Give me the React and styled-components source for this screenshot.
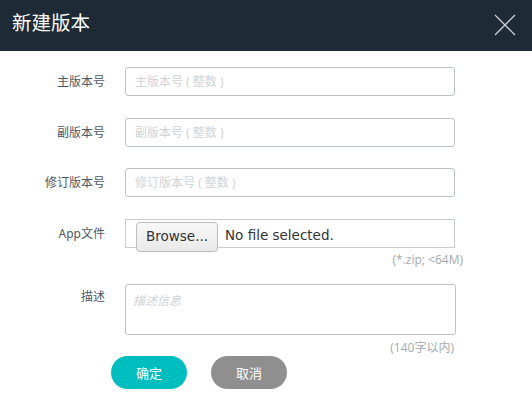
import React from 'react';
import styled, { createGlobalStyle } from 'styled-components';

const GlobalStyle = createGlobalStyle`
    html, body {
        margin: 0;
        padding: 0;
        background: #ffffff;
    }
    body {
        font-family: 'Noto Sans', 'Noto Sans CJK SC', sans-serif;
    }
`;

const fields = [
    { label: '主版本号', placeholder: '主版本号 ( 整数 )' },
    { label: '副版本号', placeholder: '副版本号 ( 整数 )' },
    { label: '修订版本号', placeholder: '修订版本号 ( 整数 )' },
];

const CloseIcon = () => (
    <svg width="22" height="22" viewBox="0 0 22 22">
        <path d="M1 1 L21 21 M21 1 L1 21" stroke="#c9ced3" strokeWidth="1.3" fill="none" />
    </svg>
);

function App() {
    return (
        <Dialog>
            <GlobalStyle />
            <Header>
                <Title>新建版本</Title>
                <CloseButton><CloseIcon /></CloseButton>
            </Header>
            <Form>
                {fields.map((f) => (
                    <Row key={f.label} gap={21.67}>
                        <Label>{f.label}</Label>
                        <TextInput placeholder={f.placeholder} />
                    </Row>
                ))}
                <Row gap={0}>
                    <Label>App文件</Label>
                    <FileBox>
                        <BrowseButton>Browse...</BrowseButton>
                        <FileText>No file selected.</FileText>
                    </FileBox>
                </Row>
                <Hint right={69} top={4} bottom={16}>(*.zip; &lt;64M)</Hint>
                <Row top gap={0}>
                    <Label top>描述</Label>
                    <TextArea placeholder="描述信息" />
                </Row>
                <Hint right={78} top={5} bottom={0}>(140字以内)</Hint>
                <Actions>
                    <ActionButton color="#00bdbf">确定</ActionButton>
                    <ActionButton color="#8f8f8f">取消</ActionButton>
                </Actions>
            </Form>
        </Dialog>
    );
}

const Dialog = styled.div`
    width: 532px;
    height: 418px;
    background: #ffffff;
    display: flex;
    flex-direction: column;
    overflow: hidden;
`;

const Header = styled.div`
    flex-shrink: 0;
    height: 51px;
    background: #1e2a36;
    display: flex;
    align-items: flex-start;
    justify-content: space-between;
    padding: 0 16px 0 12px;
    box-sizing: border-box;
`;

const Title = styled.h1`
    margin: 9px 0 0 0;
    font-size: 19.5px;
    font-weight: 400;
    line-height: 26px;
    color: #ffffff;
    font-family: 'Noto Sans CJK SC', sans-serif;
`;

const CloseButton = styled.div`
    margin-top: 14px;
    width: 22px;
    height: 22px;
    cursor: pointer;
`;

const Form = styled.div`
    display: flex;
    flex-direction: column;
    padding-top: 16px;
`;

const Row = styled.div`
    display: flex;
    align-items: ${({ top }) => (top ? 'flex-start' : 'center')};
    margin-bottom: ${({ gap }) => gap}px;
`;

const Label = styled.label`
    width: 125px;
    padding-right: 20px;
    box-sizing: border-box;
    text-align: right;
    font-size: 12px;
    line-height: 16px;
    color: #4e5964;
    font-family: 'Noto Sans', 'Noto Sans CJK SC', sans-serif;
    padding-top: ${({ top }) => (top ? '5px' : '1px')};
`;

const TextInput = styled.input`
    width: 330px;
    height: 29px;
    box-sizing: border-box;
    border: 1px solid #bcc2c8;
    border-radius: 3px;
    padding: 0 9px;
    margin: 0;
    font-size: 12px;
    font-family: 'Noto Sans', 'Noto Sans CJK SC', sans-serif;
    outline: none;

    &::placeholder {
        color: #cfd3d7;
    }
`;

const FileBox = styled.div`
    width: 330px;
    height: 29px;
    box-sizing: border-box;
    border: 1px solid #c8cdd2;
    display: flex;
    align-items: flex-start;
    padding-left: 10px;
`;

const BrowseButton = styled.div`
    margin-top: 2px;
    height: 30px;
    width: 82px;
    flex-shrink: 0;
    box-sizing: border-box;
    border: 1px solid #bdbdbd;
    border-radius: 4px;
    background: linear-gradient(#f8f8f8, #e9e9e9);
    color: #333333;
    display: flex;
    align-items: center;
    justify-content: center;
    padding-bottom: 2px;
    font-family: 'DejaVu Sans', sans-serif;
    font-size: 13.5px;
`;

const FileText = styled.span`
    margin-left: 7px;
    font-size: 13.5px;
    color: #333333;
    line-height: 29px;
    margin-top: 1px;
    font-family: 'DejaVu Sans', sans-serif;
`;

const Hint = styled.div`
    text-align: right;
    padding-right: ${({ right }) => right}px;
    font-size: 12px;
    line-height: 16px;
    color: #a2aab1;
    margin-top: ${({ top }) => top}px;
    margin-bottom: ${({ bottom }) => bottom}px;
    font-family: 'Open Sans', 'Noto Sans CJK SC', sans-serif;
`;

const TextArea = styled.textarea`
    width: 331px;
    height: 51px;
    box-sizing: border-box;
    border: 1px solid #bcc2c8;
    border-radius: 3px;
    padding: 6px 7px;
    margin: 0;
    resize: none;
    font-size: 12px;
    font-family: 'Noto Sans', 'Noto Sans CJK SC', sans-serif;
    outline: none;
    display: block;

    &::placeholder {
        color: #cfd3d7;
        font-style: italic;
    }
`;

const Actions = styled.div`
    display: flex;
    gap: 24px;
    padding-left: 111px;
`;

const ActionButton = styled.button`
    width: 76px;
    height: 33px;
    border: none;
    border-radius: 17px;
    background: ${({ color }) => color};
    color: #ffffff;
    font-size: 13px;
    font-family: 'Noto Sans CJK SC', sans-serif;
    cursor: pointer;
`;

export default App;
